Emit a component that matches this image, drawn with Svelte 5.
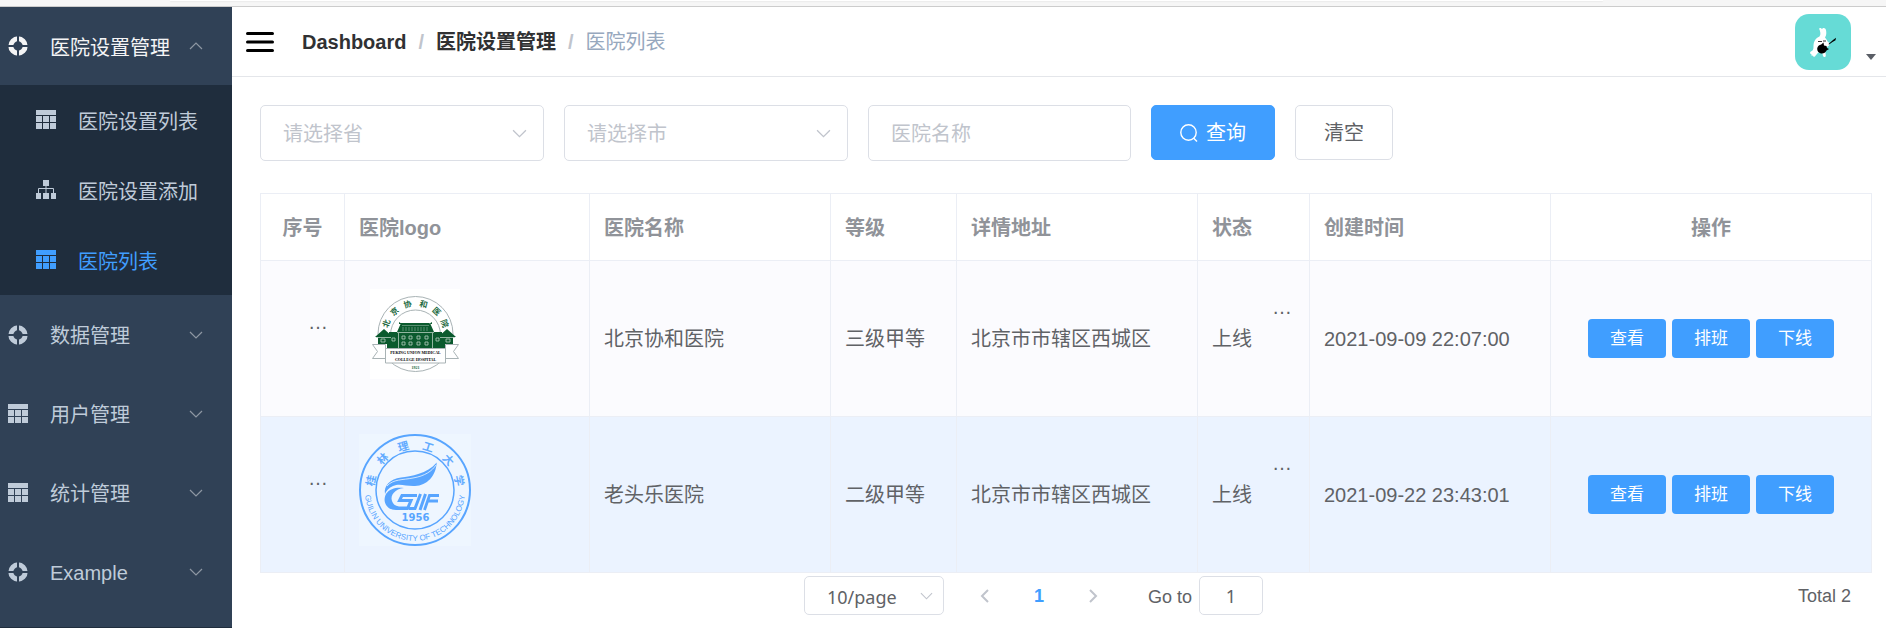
<script>
  const openGroup = {
    label: '医院设置管理',
    children: [
      { label: '医院设置列表', icon: 'table', active: false },
      { label: '医院设置添加', icon: 'tree', active: false },
      { label: '医院列表', icon: 'table', active: true }
    ]
  };
  const groups = [
    { label: '数据管理', icon: 'ring' },
    { label: '用户管理', icon: 'table' },
    { label: '统计管理', icon: 'table' },
    { label: 'Example', icon: 'ring' }
  ];
  const rows = [
    { logo: 'pumch', name: '北京协和医院', level: '三级甲等', address: '北京市市辖区西城区', status: '上线', created: '2021-09-09 22:07:00' },
    { logo: 'glut', name: '老头乐医院', level: '二级甲等', address: '北京市市辖区西城区', status: '上线', created: '2021-09-22 23:43:01', hover: true }
  ];
  const actions = ['查看', '排班', '下线'];
  const glutChars = [
    { c: '桂', a: -78 },
    { c: '林', a: -46 },
    { c: '理', a: -15 },
    { c: '工', a: 17 },
    { c: '大', a: 48 },
    { c: '学', a: 78 }
  ];
  const pumchChars = [
    { c: '北', a: -70 },
    { c: '京', a: -43 },
    { c: '协', a: -15 },
    { c: '和', a: 15 },
    { c: '医', a: 43 },
    { c: '院', a: 70 }
  ];
</script>

{#snippet icon(name)}
  <svg class="icon" viewBox="0 0 20 20" aria-hidden="true">
    {#if name === 'ring'}
      <circle cx="10" cy="10" r="7.2" fill="none" stroke="currentColor" stroke-width="5" />
      <path d="M10 0v6M10 14v6M0 10h6M14 10h6" class="cut" />
    {:else if name === 'table'}
      <path fill="currentColor" d="M0 0h20v5H0zM0 6h6v6H0zM7 6h6v6H7zM14 6h6v6h-6zM0 13h6v6H0zM7 13h6v6H7zM14 13h6v6h-6z" />
    {:else}
      <path fill="currentColor" d="M7 0h6v6h-6zM0 13h5v6H0zM7 13h6v6H7zM15 13h5v6h-5z" />
      <path fill="none" stroke="currentColor" d="M10 6v7M2.500 13V8.500h15V13" />
    {/if}
  </svg>
{/snippet}

{#snippet chevron(up)}
  <svg class="chevron" viewBox="0 0 14 8" aria-hidden="true">
    <path d={up ? 'M1 7 7 1l6 6' : 'M1 1l6 6 6-6'} fill="none" stroke="currentColor" stroke-width="1.200" />
  </svg>
{/snippet}

<div class="strip"><div class="strip-tab"></div></div>
<div class="app">
  <nav class="sidebar">
    <button class="group open">
      {@render icon('ring')}
      <span>{openGroup.label}</span>
      {@render chevron(true)}
    </button>
    <div class="submenu">
      {#each openGroup.children as item}
        <a href="#list" class:active={item.active}>
          {@render icon(item.icon)}
          <span>{item.label}</span>
        </a>
      {/each}
    </div>
    {#each groups as g}
      <button class="group">
        {@render icon(g.icon)}
        <span>{g.label}</span>
        {@render chevron(false)}
      </button>
    {/each}
  </nav>

  <div class="content">
    <header>
      <button class="burger" aria-label="menu">
        <svg viewBox="0 0 28 20"><path d="M1.500 1.500h25M1.500 10h25M1.500 18.500h25" stroke="#000" stroke-width="3" stroke-linecap="round" /></svg>
      </button>
      <div class="crumbs">
        <a href="#dashboard">Dashboard</a>
        <i>/</i>
        <a href="#hospset">医院设置管理</a>
        <i>/</i>
        <span>医院列表</span>
      </div>
      <button class="user" aria-label="user">
        <svg class="avatar" viewBox="0 0 56 56">
          <rect width="56" height="56" rx="14" fill="#66dbd6" />
          <path fill="#fff" d="M24 14.500c1.500-1.200 2.500-.5 3 .8.500-2 3.500-2 4 .7.500 3 .5 5-1 7.500 1.500 1.500 2 3 3 4.500 1.500.5 2 2 1 3.500l-4 3 .8 7c0 2-2.300 2-2.800.5l-.8-3.500h-4l-2.500 3c-1 2-2.700 1.500-2.700 0-1.500.5-2 0-1.500-1.500-2 0-2-2.500.5-3 1.500-1 1.500-3 1.500-5.500.3-4 2-7.500 6-9 1.500-2 1-5-.5-8z" />
          <path fill="#000" d="M28.500 28.500l.5 3 2.500.5.500 2 2 1-2.500 1.500c-1 2-3 3.500-5.500 3s-4-2.500-3.800-5c.3-2.200 2-3.800 4-4zM33.500 30l4.500-4 3-2.200-.5 2.500-3 1.700-3.500 2.500z" />
          <path d="M23 27.500h4M28 27h3" stroke="#333" />
        </svg>
        <svg class="caret" viewBox="0 0 10 6"><path d="M0 0h10L5 6z" fill="#5a5e66" /></svg>
      </button>
    </header>

    <main>
      <form class="filters">
        <div class="pick">
          <select aria-label="请选择省"><option>请选择省</option></select>
          {@render chevron(false)}
        </div>
        <div class="pick">
          <select aria-label="请选择市"><option>请选择市</option></select>
          {@render chevron(false)}
        </div>
        <input type="text" placeholder="医院名称" aria-label="医院名称" />
        <button type="button" class="btn primary">
          <svg viewBox="0 0 18 18" aria-hidden="true"><circle cx="8.500" cy="8.500" r="7.700" fill="none" stroke="#fff" stroke-width="1.400" /><path d="M13.500 14l3.500 3.500" stroke="#fff" stroke-width="1.400" /></svg>
          查询
        </button>
        <button type="button" class="btn">清空</button>
      </form>

      <table>
        <colgroup>
          <col class="c-index" /><col class="c-logo" /><col class="c-wide" /><col class="c-level" />
          <col class="c-wide" /><col class="c-status" /><col class="c-wide" /><col class="c-action" />
        </colgroup>
        <thead>
          <tr>
            <th class="center">序号</th><th>医院logo</th><th>医院名称</th><th>等级</th>
            <th>详情地址</th><th>状态</th><th>创建时间</th><th class="center">操作</th>
          </tr>
        </thead>
        <tbody>
          {#each rows as row}
            <tr class:hover={row.hover}>
              <td class="index">…</td>
              <td class="logo">
                {#if row.logo === 'pumch'}
                  <svg viewBox="-11 -11 112 112" role="img" aria-label={row.name}>
                    <rect width="90" height="90" fill="#fff" />
                    <g fill="none" stroke="#a9b3b5" stroke-width="1">
                      <circle cx="45.500" cy="45" r="37.500" />
                      <circle cx="45.500" cy="46" r="25" />
                    </g>
                    <g class="calli green">
                      {#each pumchChars as p}
                        <text x="45.500" y="17" transform="rotate({p.a} 45.500 45)">{p.c}</text>
                      {/each}
                    </g>
                    <g fill="#0b5a2e">
                      <path d="M31 34h29l4 9H27zM29 33l3 2h-3zM62 33l-3 2h3zM19 43h53v17H19z" />
                      <path d="M14 40l9 8H5zM8 48h12v7H8zM77 40l9 8H68zM71 48h12v7H71z" />
                      <path d="M17 54h58v6H17z" />
                    </g>
                    <path d="M32 36.500h27M33 38v4M36 38v4M39 38v4M42 38v4M45 38v4M48 38v4M51 38v4M54 38v4M57 38v4" stroke="#8fb39f" stroke-width=".6" />
                    <path d="M27 43.500h37M28.500 44v15M62.500 44v15M6 48.500h15M70 48.500h15" stroke="#b5cdbf" stroke-width=".8" />
                    <g fill="none" stroke="#b5cdbf" stroke-width=".8">
                      <path d="M32 47h3v3h-3zM39 47h3v3h-3zM47 47h3v3h-3zM55 47h3v3h-3zM32 53h3v3h-3zM39 53h3v3h-3zM47 53h3v3h-3zM55 53h3v3h-3zM22 49h3v3h-3zM66 49h3v3h-3zM11 50h4v3h-4zM76 50h4v3h-4z" />
                    </g>
                    <g fill="#fff" stroke="#a9b3b5" stroke-width="1">
                      <path d="M15.500 55.500H2.500l5 7-5 7h13zM75.500 55.500h13l-5 7 5 7h-13z" />
                      <path d="M15.500 59.500h60v14.500h-60z" />
                    </g>
                    <text class="serif" x="45.500" y="65">PEKING UNION MEDICAL</text>
                    <text class="serif" x="45.500" y="72">COLLEGE HOSPITAL</text>
                    <text class="serif year-small" x="45.500" y="80">1921</text>
                  </svg>
                {:else}
                  <svg viewBox="0 0 112 112" role="img" aria-label={row.name}>
                    <rect width="112" height="112" fill="#eef6ff" />
                    <g fill="none" stroke="#58a5ff">
                      <circle cx="56" cy="56" r="55" stroke-width="2" />
                      <circle cx="56" cy="56" r="39" stroke-width="1.500" />
                    </g>
                    <g class="calli blue">
                      {#each glutChars as p}
                        <text x="56" y="15" transform="rotate({p.a} 56 56)">{p.c}</text>
                      {/each}
                    </g>
                    <path id="glut-arc" d="M6 57A50 50 0 0 0 106 57" fill="none" />
                    <text class="ring-text"><textPath href="#glut-arc" startOffset="50%">GUILIN UNIVERSITY OF TECHNOLOGY</textPath></text>
                    <path fill="#58a5ff" d="M77.700 28.500C77 42 68 51.500 56 52 47 52.500 41 49 34 52 30 53.500 27 57 26 60 24.500 52 31 45 42 43.500 52 42 68 40 77.700 28.500z" />
                    <path fill="#58a5ff" d="M27 60C31 54 38 53 45 54 36 55 31 61 33 67 34 70 36 72 40 72.500H48L46 76H37C28 76 23 68 27 60z" />
                    <path fill="none" stroke="#eef6ff" stroke-width=".8" d="M28 52C34 45 44 46 54 44 66 42 73 37 77 31" />
                    <g fill="none" stroke="#58a5ff" stroke-width="3">
                      <path d="M58 61.500H43L40.500 66.500H52L48.500 74.500H42" />
                      <path d="M61.500 60L56 74.500H50M66.500 60L61 76" />
                      <path d="M80 61.500H70.500L65.500 76M79 67H69" stroke-width="2.800" />
                    </g>
                    <text class="year" x="56.500" y="87">1956</text>
                  </svg>
                {/if}
              </td>
              <td>{row.name}</td>
              <td>{row.level}</td>
              <td>{row.address}</td>
              <td class="status"><div class="dots">…</div>{row.status}</td>
              <td>{row.created}</td>
              <td>
                <div class="actions">
                  {#each actions as a}<button class="small">{a}</button>{/each}
                </div>
              </td>
            </tr>
          {/each}
        </tbody>
      </table>

      <div class="pager">
        <div class="pages">
          <div class="pick size">
            <select aria-label="page size"><option>10/page</option></select>
            {@render chevron(false)}
          </div>
          <button class="step" aria-label="previous"><svg viewBox="0 0 10 14"><path d="M8 1L2 7l6 6" /></svg></button>
          <button class="step current">1</button>
          <button class="step" aria-label="next"><svg viewBox="0 0 10 14"><path d="M2 1l6 6-6 6" /></svg></button>
          <label for="goto">Go to</label>
          <input id="goto" type="text" value="1" />
        </div>
        <span class="total">Total 2</span>
      </div>
    </main>
  </div>
</div>

<style>
  :global(body) {
    margin: 0;
    background: #fff;
    color: #606266;
    font: 20px/32px 'Liberation Sans', 'Noto Sans CJK SC', sans-serif;
  }
  :global(#app) {
    display: flex;
    flex-direction: column;
    min-height: 100vh;
  }
  * {
    box-sizing: border-box;
  }
  button,
  input,
  select {
    font: inherit;
    color: inherit;
    margin: 0;
  }
  button {
    padding: 0;
    border: 0;
    background: none;
    cursor: pointer;
  }
  a {
    color: inherit;
    text-decoration: none;
  }
  svg {
    display: block;
    flex: none;
  }
  .strip {
    height: 7px;
    background: #f6f6f6;
    border-bottom: 1px solid #ccc;
  }
  .strip-tab {
    height: 1px;
    width: 76%;
    margin-left: 9%;
    background: #fff;
    box-shadow: 0 1px 1px #ececec;
  }
  .app {
    flex: 1;
    display: flex;
  }
  .sidebar {
    flex: none;
    width: 232px;
    background: #304156;
    color: #bfcbd9;
    border-bottom: 1px solid #1f2d3d;
  }
  .group {
    display: flex;
    align-items: center;
    gap: 22px;
    width: 100%;
    height: 79px;
    padding: 0 29px 0 8px;
    text-align: left;
  }
  .group span,
  .submenu span {
    flex: 1;
    padding-top: 2px;
    white-space: nowrap;
  }
  .submenu span,
  .open span {
    padding-top: 4px;
  }
  .group span {
    min-width: 0;
  }
  .group.open {
    height: 78px;
    color: #f4f4f5;
  }
  .icon {
    width: 20px;
    height: 20px;
  }
  .cut {
    stroke: #304156;
    stroke-width: 2;
  }
  .chevron {
    width: 14px;
    height: 8px;
    color: #8e97a3;
  }
  .submenu {
    background: #1f2d3d;
  }
  .submenu a {
    display: flex;
    align-items: center;
    gap: 22px;
    height: 70px;
    padding-left: 36px;
  }
  .submenu a.active {
    color: #409eff;
  }
  .content {
    flex: 1;
    min-width: 0;
  }
  header {
    display: flex;
    align-items: center;
    height: 70px;
    padding: 0 10px 0 14px;
    border-bottom: 1px solid #e4e6ea;
  }
  .burger svg {
    width: 28px;
    height: 20px;
  }
  .crumbs {
    flex: 1;
    display: flex;
    gap: 12px;
    margin-left: 28px;
    color: #97a8be;
  }
  .crumbs a {
    color: #303133;
    font-weight: 700;
  }
  .crumbs i {
    color: #c0c4cc;
    font-style: normal;
    font-weight: 700;
  }
  .user {
    display: flex;
    align-items: flex-end;
    gap: 15px;
  }
  .avatar {
    width: 56px;
    height: 56px;
  }
  .caret {
    width: 10px;
    height: 6px;
    margin-bottom: 10px;
  }
  main {
    padding: 28px 14px 0 28px;
  }
  .filters {
    display: flex;
    gap: 20px;
    margin-bottom: 32px;
  }
  .pick {
    display: grid;
    align-items: center;
    width: 284px;
  }
  .pick select,
  .pick .chevron {
    grid-area: 1 / 1;
  }
  .pick .chevron {
    justify-self: end;
    margin-right: 17px;
    width: 15px;
    height: 9px;
    color: #c0c4cc;
    pointer-events: none;
  }
  select,
  input {
    appearance: none;
    width: 100%;
    height: 56px;
    padding: 2px 22px 0;
    border: 1px solid #dcdfe6;
    border-radius: 5px;
    background: #fff;
    outline: 0;
  }
  .filters select,
  input::placeholder {
    color: #c0c4cc;
    opacity: 1;
  }
  .filters input {
    width: 263px;
  }
  .btn {
    display: flex;
    align-items: center;
    gap: 8px;
    height: 55px;
    padding: 0 28px;
    border: 1px solid #dcdfe6;
    border-radius: 5px;
  }
  .primary,
  .small {
    background: #409eff;
    border-color: #409eff;
    color: #fff;
  }
  .btn svg {
    width: 18px;
    height: 18px;
  }
  table {
    width: 100%;
    table-layout: fixed;
    border-spacing: 0;
    border: solid #ebeef5;
    border-width: 1px 0 0 1px;
  }
  .c-index {
    width: 84px;
  }
  .c-logo {
    width: 245px;
  }
  .c-wide {
    width: 241px;
  }
  .c-level {
    width: 126px;
  }
  .c-status {
    width: 112px;
  }
  .c-action {
    width: 321px;
  }
  th,
  td {
    padding: 0 14px;
    border: solid #ebeef5;
    border-width: 0 1px 1px 0;
    text-align: left;
    white-space: nowrap;
  }
  th {
    height: 67px;
    padding-top: 2px;
    color: #909399;
  }
  td {
    height: 156px;
    background: #fbfbfe;
  }
  .hover td {
    background: #ebf3ff;
  }
  th.center {
    text-align: center;
  }
  .index {
    padding: 0 16px 34px 0;
    text-align: right;
  }
  .status {
    padding-bottom: 32px;
  }
  .dots {
    padding-right: 3px;
    text-align: right;
  }
  .logo {
    padding-bottom: 10px;
  }
  .logo svg {
    width: 112px;
    height: 112px;
  }
  .calli {
    font: 700 8px 'Noto Sans CJK SC', sans-serif;
    text-anchor: middle;
  }
  .green,
  .year-small {
    fill: #1c6a41;
  }
  .blue {
    font-size: 11px;
    fill: #62abff;
  }
  .serif {
    font: 700 4px 'Liberation Serif', serif;
    text-anchor: middle;
  }
  .ring-text {
    font: 8px 'Liberation Sans', sans-serif;
    fill: #58a5ff;
    text-anchor: middle;
  }
  .year {
    font: 700 10px 'DejaVu Sans', sans-serif;
    fill: #58a5ff;
    text-anchor: middle;
  }
  .actions {
    display: flex;
    justify-content: center;
    gap: 6px;
  }
  .small {
    width: 78px;
    height: 39px;
    border-radius: 4px;
    font-size: 17px;
  }
  .pager {
    display: flex;
    align-items: center;
    padding: 3px 21px 0 9px;
    font-size: 18px;
  }
  .pages {
    flex: 1;
    display: flex;
    align-items: center;
    justify-content: center;
  }
  .pager select,
  .pager input {
    height: 39px;
    font-family: 'Noto Sans', sans-serif;
  }
  .size {
    width: 140px;
    margin-right: 14px;
  }
  .pager .size .chevron {
    margin-right: 11px;
    width: 13px;
    height: 8px;
  }
  .step {
    display: flex;
    align-items: center;
    justify-content: center;
    width: 54px;
    height: 39px;
  }
  .step svg {
    width: 10px;
    height: 14px;
    fill: none;
    stroke: #c0c4cc;
    stroke-width: 2;
  }
  .current {
    color: #409eff;
    font-weight: 700;
  }
  .pager label {
    margin: 3px 7px 0 28px;
  }
  .pager input {
    width: 64px;
    padding: 0;
    text-align: center;
  }
</style>
